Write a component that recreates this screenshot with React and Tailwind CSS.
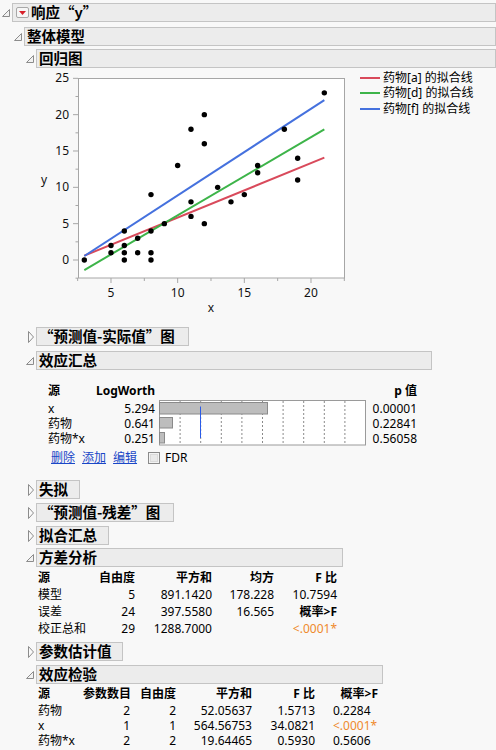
import React from "react";

const FONT = "font-['Noto_Sans','Noto_Sans_CJK_SC',sans-serif]";
const HFONT = "font-['Noto_Sans_CJK_SC','Noto_Sans',sans-serif]";

function OpenTri() {
  return (
    <svg width="8" height="8" viewBox="0 0 8 8">
      <polygon points="7.5,0.5 7.5,7.5 0.5,7.5" fill="#f2f2f2" stroke="#8c8c8c" strokeWidth="1" />
    </svg>
  );
}

function ClosedTri() {
  return (
    <svg width="6" height="12" viewBox="0 0 6 12">
      <polygon points="0.5,0.5 5.5,6 0.5,11.5" fill="#fafafa" stroke="#8c8c8c" strokeWidth="1" />
    </svg>
  );
}

function Row({ open, title, w, mt }) {
  return (
    <div className={`flex items-center ${mt}`}>
      <div className="w-[12px] flex justify-end pr-[2px]">{open ? <OpenTri /> : <ClosedTri />}</div>
      <div
        className={`h-[19px] ${w} border border-[#c4c4c4] bg-[#ececec] flex items-center pl-[2px] text-[14.5px] font-bold leading-none whitespace-nowrap ${HFONT}`}
      >
        {title}
      </div>
    </div>
  );
}

const px = (x) => 44.33 + 13.333 * x;
const py = (y) => 260 - 7.2667 * y;

const pts = [
  [3, 0], [5, 2], [5, 1], [6, 4], [6, 2], [6, 1], [6, 0], [7, 3], [7, 1], [8, 9],
  [8, 4], [8, 1], [8, 0], [9, 5], [10, 13], [11, 18], [11, 8], [11, 6], [12, 20], [12, 16],
  [12, 5], [13, 10], [14, 8], [15, 9], [16, 13], [16, 12], [18, 18], [19, 14], [19, 11], [21, 23],
];

const fitLines = [
  { c: "#d94a5b", a: [3, 0.6], b: [21, 14.08] },
  { c: "#3db449", a: [3, -1.38], b: [21, 17.98] },
  { c: "#4571de", a: [3, 0.55], b: [21, 22.0] },
];

function Plot() {
  const yMajor = [0, 5, 10, 15, 20, 25];
  const yMinor = [-2.5, 2.5, 7.5, 12.5, 17.5, 22.5];
  const xMajor = [5, 10, 15, 20];
  const xMinor = [2.5, 7.5, 12.5, 17.5, 22.5];
  return (
    <svg width="314" height="250" viewBox="36 70 314 250">
      <rect x="78.5" y="78.5" width="266" height="199.5" fill="#ffffff" stroke="#a6a6a6" strokeWidth="1" />
      {yMajor.map((v) => (
        <g key={"ym" + v}>
          <line x1="73" x2="78" y1={py(v)} y2={py(v)} stroke="#a6a6a6" />
          <text x="69" y={py(v) + 4} textAnchor="end" fontSize="12" fill="#111">{v}</text>
        </g>
      ))}
      {yMinor.map((v) => (
        <line key={"yn" + v} x1="75.5" x2="78" y1={py(v)} y2={py(v)} stroke="#a6a6a6" />
      ))}
      {xMajor.map((v) => (
        <g key={"xm" + v}>
          <line x1={px(v)} x2={px(v)} y1="278" y2="283" stroke="#a6a6a6" />
          <text x={px(v)} y="297" textAnchor="middle" fontSize="12" fill="#111">{v}</text>
        </g>
      ))}
      {xMinor.map((v) => (
        <line key={"xn" + v} x1={px(v)} x2={px(v)} y1="278" y2="281" stroke="#a6a6a6" />
      ))}
      <text x="44" y="184" textAnchor="middle" fontSize="12" fill="#111">y</text>
      <text x="211" y="312" textAnchor="middle" fontSize="12" fill="#111">x</text>
      {fitLines.map((l, i) => (
        <line key={i} x1={px(l.a[0])} y1={py(l.a[1])} x2={px(l.b[0])} y2={py(l.b[1])} stroke={l.c} strokeWidth="2" />
      ))}
      {pts.map((p, i) => (
        <circle key={i} cx={px(p[0])} cy={py(p[1])} r="2.7" fill="#000" />
      ))}
    </svg>
  );
}

function Legend() {
  const items = [
    ["#d94a5b", "药物[a] 的拟合线"],
    ["#3db449", "药物[d] 的拟合线"],
    ["#4571de", "药物[f] 的拟合线"],
  ];
  return (
    <div className="ml-[10px] flex flex-col">
      {items.map(([c, t]) => (
        <div key={t} className="h-[15.5px] flex items-center text-[12px] leading-none whitespace-nowrap">
          <div className="w-[20px] h-[2px] mr-[3px]" style={{ backgroundColor: c }} />
          <span>{t}</span>
        </div>
      ))}
    </div>
  );
}

function BarBox() {
  const grid = [1, 2, 3, 4, 5, 6, 7, 8, 9].map((k) => 159.5 + 20.6 * k);
  const bars = [
    { w: 108, y: 402.5, h: 11.5 },
    { w: 13, y: 417.5, h: 10.5 },
    { w: 5, y: 432.5, h: 10.5 },
  ];
  return (
    <svg width="207" height="46" viewBox="159 400 207 46" className="ml-[4px] shrink-0">
      <rect x="159.5" y="400.5" width="206" height="44.5" fill="#ffffff" stroke="#9a9a9a" />
      {grid.map((g) => (
        <line key={g} x1={g} x2={g} y1="401" y2="445" stroke="#8a8a8a" strokeDasharray="2 2" />
      ))}
      {bars.map((b, i) => (
        <rect key={i} x="159.5" y={b.y} width={b.w} height={b.h} fill="#bdbdbd" stroke="#8a8a8a" />
      ))}
      <line x1="200.5" x2="200.5" y1="406.5" y2="438" stroke="#2a5be8" strokeWidth="1" />
    </svg>
  );
}

function EffectSummary() {
  const rows = [
    ["x", "5.294", "0.00001"],
    ["药物", "0.641", "0.22841"],
    ["药物*x", "0.251", "0.56058"],
  ];
  return (
    <div className="ml-[24px] mt-[12px] text-[12px] leading-none">
      <div className="flex h-[18px] items-center font-bold">
        <div className="w-[47px]">源</div>
        <div className="w-[60px] text-right">LogWorth</div>
        <div className="w-[207px] ml-[4px]" />
        <div className="w-[51px] text-right">p 值</div>
      </div>
      <div className="flex">
        <div className="flex flex-col">
          {rows.map((r) => (
            <div key={r[0]} className="flex h-[15px] items-center pt-[2px]">
              <div className="w-[47px]">{r[0]}</div>
              <div className="w-[60px] text-right">{r[1]}</div>
            </div>
          ))}
        </div>
        <BarBox />
        <div className="flex flex-col">
          {rows.map((r) => (
            <div key={r[0]} className="h-[15px] w-[51px] flex items-center justify-end pt-[2px]">
              {r[2]}
            </div>
          ))}
        </div>
      </div>
      <div className="flex items-center h-[14px] mt-[5px]">
        <span className="ml-[3px] text-[#1a47c7] underline">删除</span>
        <span className="ml-[7px] text-[#1a47c7] underline">添加</span>
        <span className="ml-[7px] text-[#1a47c7] underline">编辑</span>
        <div className="ml-[11px] w-[12px] h-[12px] border border-[#8a8a8a] bg-[#f3f3f3] flex items-center justify-center">
          <div className="w-[8px] h-[8px] border border-[#dadada] bg-[#e9e9e9]" />
        </div>
        <span className="ml-[5px]">FDR</span>
      </div>
    </div>
  );
}

function Anova() {
  const rows = [
    ["模型", "5", "891.1420", "178.228", "10.7594", "n"],
    ["误差", "24", "397.5580", "16.565", "概率>F", "b"],
    ["校正总和", "29", "1288.7000", "", "<.0001*", "o"],
  ];
  return (
    <div className="ml-[14px] mt-[2px] text-[12px] leading-none">
      <div className="flex h-[17px] items-center font-bold">
        <div className="w-[61px]">源</div>
        <div className="w-[36px] text-right">自由度</div>
        <div className="w-[77px] text-right">平方和</div>
        <div className="w-[62px] text-right">均方</div>
        <div className="w-[63px] text-right">F 比</div>
      </div>
      {rows.map((r) => (
        <div key={r[0]} className="flex h-[17px] items-center">
          <div className="w-[61px]">{r[0]}</div>
          <div className="w-[36px] text-right">{r[1]}</div>
          <div className="w-[77px] text-right">{r[2]}</div>
          <div className="w-[62px] text-right">{r[3]}</div>
          <div
            className={`w-[63px] text-right ${r[5] === "b" ? "font-bold" : ""} ${r[5] === "o" ? "text-[#ef8a2c]" : ""}`}
          >
            {r[4]}
          </div>
        </div>
      ))}
    </div>
  );
}

function EffectTests() {
  const rows = [
    ["药物", "2", "2", "52.05637", "1.5713", "0.2284", false],
    ["x", "1", "1", "564.56753", "34.0821", "<.0001*", true],
    ["药物*x", "2", "2", "19.64465", "0.5930", "0.5606", false],
  ];
  return (
    <div className="ml-[14px] text-[12px] leading-none">
      <div className="flex h-[19px] items-center font-bold whitespace-nowrap">
        <div className="w-[45px]">源</div>
        <div className="w-[47px] text-right">参数数目</div>
        <div className="w-[46px] text-right">自由度</div>
        <div className="w-[76px] text-right">平方和</div>
        <div className="w-[63px] text-right">F 比</div>
        <div className="w-[63px] text-right">概率&gt;F</div>
      </div>
      {rows.map((r) => (
        <div key={r[0]} className="flex h-[15px] items-center whitespace-nowrap">
          <div className="w-[45px]">{r[0]}</div>
          <div className="w-[47px] text-right">{r[1]}</div>
          <div className="w-[46px] text-right">{r[2]}</div>
          <div className="w-[76px] text-right">{r[3]}</div>
          <div className="w-[63px] text-right">{r[4]}</div>
          <div className={`w-[63px] pl-[18px] ${r[6] ? "text-[#ef8a2c]" : ""}`}>{r[5]}</div>
        </div>
      ))}
    </div>
  );
}

export default function App() {
  return (
    <div className={`w-[496px] h-[750px] overflow-hidden bg-[#f8f8f8] text-black ${FONT}`}>
      <div className="pt-[3px]">
        <div className="flex items-center">
          <div className="w-[12px] flex justify-end pr-[2px]">
            <OpenTri />
          </div>
          <div className={`h-[19px] w-[484px] border border-[#c4c4c4] bg-[#ececec] flex items-center text-[14.5px] font-bold leading-none whitespace-nowrap ${HFONT}`}>
            <div className="ml-[3px] w-[13px] h-[11px] border border-[#a8a8a8] rounded-[2px] bg-[#f6f6f6] flex items-center justify-center">
              <svg width="7" height="4" viewBox="0 0 7 4">
                <polygon points="0,0 7,0 3.5,4" fill="#d8202a" />
              </svg>
            </div>
            <span className="ml-[2px]">响应“y”</span>
          </div>
        </div>
        <div className="pl-[12px] mt-[5px]">
          <Row open title="整体模型" w="w-[472px]" mt="mt-0" />
          <div className="pl-[12px]">
            <Row open title="回归图" w="w-[460px]" mt="mt-[3px]" />
            <div className="ml-[12px] mt-[2px] flex items-start">
              <Plot />
              <Legend />
            </div>
            <Row title="“预测值-实际值”图" w="w-[153px]" mt="mt-[7px]" />
            <Row open title="效应汇总" w="w-[396px]" mt="mt-[5px]" />
            <EffectSummary />
            <Row title="失拟" w="w-[44px]" mt="mt-[15px]" />
            <Row title="“预测值-残差”图" w="w-[138px]" mt="mt-[4px]" />
            <Row title="拟合汇总" w="w-[73px]" mt="mt-[4px]" />
            <Row open title="方差分析" w="w-[307px]" mt="mt-[3px]" />
            <Anova />
            <Row title="参数估计值" w="w-[87px]" mt="mt-[5px]" />
            <Row open title="效应检验" w="w-[347px]" mt="mt-[4px]" />
            <EffectTests />
          </div>
        </div>
      </div>
    </div>
  );
}
